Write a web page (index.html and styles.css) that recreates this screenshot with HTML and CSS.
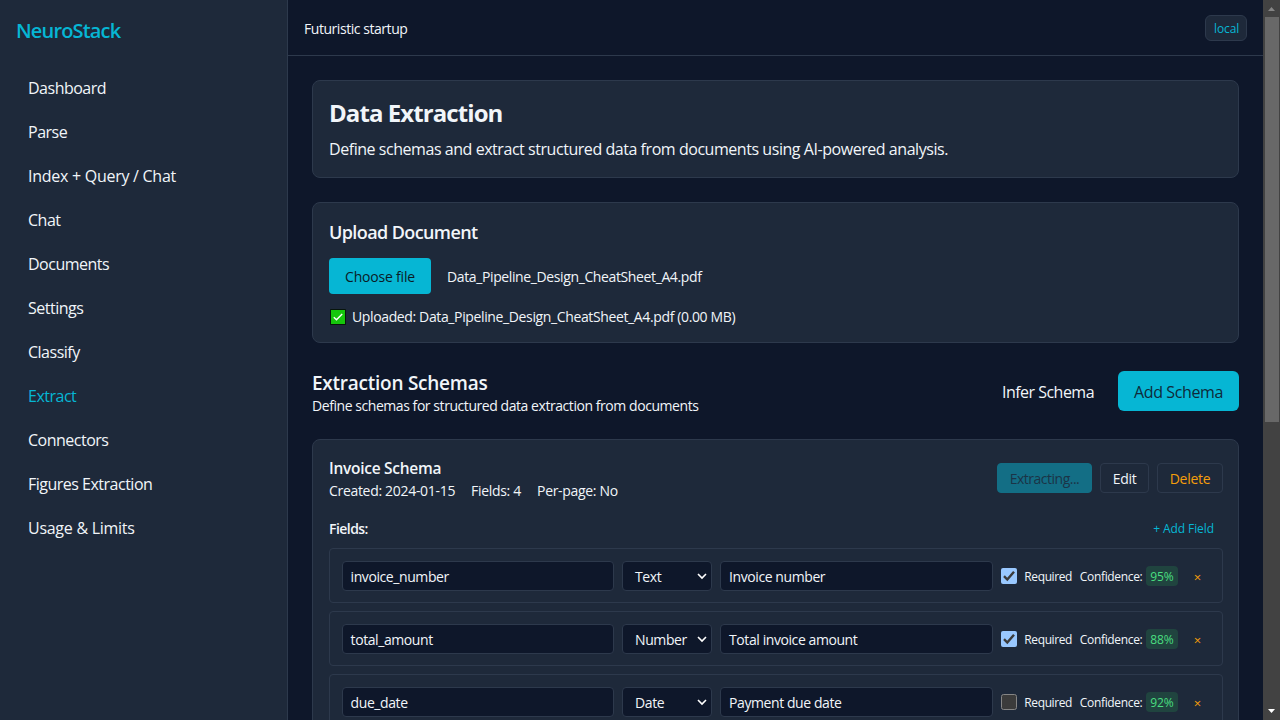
FILE: index.html
```html
<!DOCTYPE html>
<html lang="en">
<head>
<meta charset="utf-8">
<title>NeuroStack</title>
<link rel="stylesheet" href="styles.css">
</head>
<body>
<div class="app">
  <aside class="sidebar">
    <div class="brand">NeuroStack</div>
    <nav class="nav">
      <a class="nav-item">Dashboard</a>
      <a class="nav-item">Parse</a>
      <a class="nav-item wide">Index + Query / Chat</a>
      <a class="nav-item">Chat</a>
      <a class="nav-item">Documents</a>
      <a class="nav-item">Settings</a>
      <a class="nav-item">Classify</a>
      <a class="nav-item active">Extract</a>
      <a class="nav-item">Connectors</a>
      <a class="nav-item">Figures Extraction</a>
      <a class="nav-item wide">Usage &amp; Limits</a>
    </nav>
  </aside>
  <div class="main">
    <header class="topbar"><span class="tagline">Futuristic startup</span><span class="env">local</span></header>
    <main class="content">
      <section class="card intro">
        <h1>Data Extraction</h1>
        <p>Define schemas and extract structured data from documents using AI-powered analysis.</p>
      </section>
      <section class="card upload">
        <h2>Upload Document</h2>
        <div class="file"><button class="choose">Choose file</button><span class="filename">Data_Pipeline_Design_CheatSheet_A4.pdf</span></div>
        <div class="uploaded">
          <svg width="16" height="16" viewBox="0 0 16 16"><rect width="16" height="16" rx="1" fill="#07150b"/><rect x="1" y="1" width="14" height="14" fill="#16c60c"/><path d="M3.8 8.2 6.5 10.8 12.2 5" fill="none" stroke="#fff" stroke-width="1.4"/></svg>
          <span class="uploaded-text">Uploaded: Data_Pipeline_Design_CheatSheet_A4.pdf (0.00 MB)</span>
        </div>
      </section>
      <div class="section-head">
        <div class="section-text"><h2 class="section-title">Extraction Schemas</h2><p>Define schemas for structured data extraction from documents</p></div>
        <div class="section-actions"><button class="infer">Infer Schema</button><button class="add">Add Schema</button></div>
      </div>
      <section class="card schema">
        <div class="schema-head">
          <div class="schema-info">
            <h3>Invoice Schema</h3>
            <div class="meta"><span>Created: 2024-01-15</span><span>Fields: 4</span><span>Per-page: No</span></div>
          </div>
          <div class="schema-actions"><button class="btn extracting">Extracting...</button><button class="btn edit">Edit</button><button class="btn delete">Delete</button></div>
        </div>
        <div class="fields-head"><h4>Fields:</h4><span class="add-field">+ Add Field</span></div>
        <div class="rows">
          <div class="row">
            <div class="input">invoice_number</div>
            <div class="select"><span>Text</span><svg width="10" height="8" viewBox="0 0 10 8"><path d="M1 2 5 6 9 2"/></svg></div>
            <div class="input">Invoice number</div>
            <svg class="check" width="16" height="16" viewBox="0 0 16 16"><rect width="16" height="16" rx="2" fill="#99c8ff"/><path d="M3 8.2 6.3 11.5 13 3.7" fill="none" stroke="#3b3b3b" stroke-width="2.4"/></svg>
            <span class="required">Required</span><span class="confidence">Confidence:</span><span class="score">95%</span><span class="remove">×</span>
          </div>
          <div class="row">
            <div class="input">total_amount</div>
            <div class="select"><span>Number</span><svg width="10" height="8" viewBox="0 0 10 8"><path d="M1 2 5 6 9 2"/></svg></div>
            <div class="input">Total invoice amount</div>
            <svg class="check" width="16" height="16" viewBox="0 0 16 16"><rect width="16" height="16" rx="2" fill="#99c8ff"/><path d="M3 8.2 6.3 11.5 13 3.7" fill="none" stroke="#3b3b3b" stroke-width="2.4"/></svg>
            <span class="required">Required</span><span class="confidence">Confidence:</span><span class="score">88%</span><span class="remove">×</span>
          </div>
          <div class="row">
            <div class="input">due_date</div>
            <div class="select"><span>Date</span><svg width="10" height="8" viewBox="0 0 10 8"><path d="M1 2 5 6 9 2"/></svg></div>
            <div class="input">Payment due date</div>
            <svg class="check" width="16" height="16" viewBox="0 0 16 16"><rect x=".5" y=".5" width="15" height="15" rx="2" fill="#3b3b3b" stroke="#858585"/></svg>
            <span class="required">Required</span><span class="confidence">Confidence:</span><span class="score">92%</span><span class="remove">×</span>
          </div>
        </div>
      </section>
    </main>
  </div>
  <div class="scrollbar">
    <svg width="17" height="17" viewBox="0 0 17 17"><path d="M5 11 8.5 7 12 11Z" fill="#858585"/></svg>
    <div class="thumb"></div>
    <svg class="down" width="17" height="17" viewBox="0 0 17 17"><path d="M5 6 8.5 10 12 6Z" fill="#fff"/></svg>
  </div>
</div>
</body>
</html>
```
FILE: styles.css
```css
* { box-sizing: border-box; }
body { margin: 0; background: #0e172a; color: #f1f5f9; font-family: "Open Sans", "Noto Sans", sans-serif; font-size: 16px; font-weight: 470; line-height: 24px; overflow: hidden; }
h1, h2, h3, h4, p { margin: 0; }
button { font-family: inherit; font-weight: inherit; border: 0; margin: 0; padding: 0; background: none; color: inherit; white-space: nowrap; }
svg { display: block; flex: none; }
.app { display: flex; height: 720px; overflow: hidden; white-space: nowrap; }

.sidebar { width: 288px; flex: none; background: #1e293a; border-right: 1px solid #2d394c; padding: 17px 16px 16px; }
.brand { color: #06b6d4; font-size: 20px; font-weight: 600; line-height: 28px; letter-spacing: -0.83px; }
.nav { display: flex; flex-direction: column; gap: 4px; margin-top: 23px; }
.nav-item { padding: 8px 12px; height: 40px; letter-spacing: -0.5px; }
.wide { letter-spacing: -0.27px; }
.active { color: #06b6d4; }

.main { flex: 1; min-width: 0; display: flex; flex-direction: column; }
.topbar { height: 56px; flex: none; border-bottom: 1px solid #2d394c; display: flex; align-items: center; justify-content: space-between; padding: 1px 16px 0; font-size: 14px; letter-spacing: -0.45px; }
.tagline { padding-top: 2px; }
.env { background: #1e293a; border: 1px solid #2d394c; border-radius: 6px; color: #06b6d4; font-size: 12px; font-weight: 400; line-height: 16px; padding: 5px 8px 3px; height: 26px; width: 42px; letter-spacing: -0.1px; }
.content { padding: 24px; display: flex; flex-direction: column; }
.card { background: #1e293a; border: 1px solid #2d394c; border-radius: 8px; padding: 16px; flex: none; }

.intro { height: 98px; }
.intro h1 { font-size: 24px; font-weight: 700; line-height: 32px; letter-spacing: -0.92px; }
.intro p { margin-top: 8px; line-height: 24px; letter-spacing: -0.45px; }
.upload { height: 141px; margin-top: 24px; }
h2 { font-size: 18px; font-weight: 620; line-height: 26px; letter-spacing: -0.6px; }
.file { display: flex; align-items: center; gap: 16px; margin-top: 13px; font-size: 14px; }
.choose { width: 102px; height: 36px; border-radius: 4px; background: #06b6d4; color: #0b1b26; font-size: 14px; font-weight: 500; letter-spacing: -0.2px; padding-top: 1px; }
.filename { letter-spacing: -0.38px; padding-top: 1px; }
.uploaded-text { letter-spacing: -0.37px; }
.uploaded { display: flex; align-items: center; gap: 6px; height: 20px; margin-top: 13px; padding-left: 1px; font-size: 14px; line-height: 20px; }

.section-head { display: flex; justify-content: space-between; align-items: center; height: 48px; margin-top: 24px; }
.section-text { padding-top: 2px; }
.section-title { font-size: 19px; line-height: 28px; height: 28px; letter-spacing: -0.25px; padding-top: 1px; }
.section-head p { font-size: 14px; line-height: 20px; letter-spacing: -0.44px; }
.section-actions { display: flex; gap: 8px; }
.infer, .add { height: 40px; font-size: 16px; letter-spacing: -0.52px; padding-top: 1px; }
.infer { width: 124px; }
.add { width: 121px; border-radius: 6px; background: #06b6d4; color: #0f2a3a; letter-spacing: -0.4px; font-weight: 400; }

.schema { margin-top: 24px; height: 500px; }
.schema-head { display: flex; justify-content: space-between; align-items: center; height: 44px; margin-right: -1px; }
.schema-info { padding-top: 2px; }
h3 { font-size: 15.5px; font-weight: 620; line-height: 24px; letter-spacing: -0.28px; }
.meta { display: flex; gap: 16px; font-size: 14px; line-height: 22px; letter-spacing: -0.31px; }
.schema-actions { display: flex; gap: 8px; }
.btn { height: 30px; border: 1px solid #2d394c; border-radius: 4px; font-size: 14px; padding-top: 1px; letter-spacing: -0.3px; }
.extracting { width: 95px; border-color: #136e85; background: #136e85; color: #1b3447; font-weight: 400; letter-spacing: -0.5px; }
.edit { width: 49px; }
.delete { width: 66px; color: #f59e0b; font-weight: 400; }
.fields-head { display: flex; justify-content: space-between; align-items: center; height: 20px; margin-top: 19px; padding-right: 8px; }
h4 { font-size: 14px; font-weight: 620; letter-spacing: -0.55px; }
.add-field { color: #06b6d4; font-size: 12px; font-weight: 400; letter-spacing: -0.08px; }
.rows { display: flex; flex-direction: column; gap: 8px; margin-top: 9px; margin-right: -0.6px; }
.row { display: flex; align-items: center; height: 55px; border: 1px solid #2d394c; border-radius: 4px; padding: 0 11.6px; font-size: 14px; }
.input, .select { height: 30px; border: 1px solid #2d394c; border-radius: 4px; background: #0e172a; line-height: 30px; flex: none; letter-spacing: -0.42px; }
.input { width: 272.8px; padding-left: 8px; margin-right: 7.7px; }
.select { width: 90px; padding: 0 4px 0 12px; margin-right: 8px; display: flex; align-items: center; justify-content: space-between; }
.select span { padding-top: 2px; }
.select path { fill: none; stroke: #fff; stroke-width: 1.6; }
.required, .confidence { font-size: 12px; line-height: 18px; flex: none; padding-top: 2px; }
.required { width: 55.5px; margin-left: 7.8px; letter-spacing: -0.4px; }
.confidence { width: 66px; letter-spacing: -0.34px; }
.score { width: 32px; height: 20px; flex: none; border-radius: 4px; background: #20443f; color: #4ade80; font-size: 12px; font-weight: 400; line-height: 22px; text-align: center; letter-spacing: -0.2px; }
.remove { width: 39px; flex: none; text-align: center; color: #f59e0b; font-size: 13px; padding-top: 3px; }

.scrollbar { width: 17px; flex: none; background: #424242; display: flex; flex-direction: column; align-items: center; }
.thumb { width: 14px; height: 405px; background: #686868; }
.down { margin-top: auto; }
```
